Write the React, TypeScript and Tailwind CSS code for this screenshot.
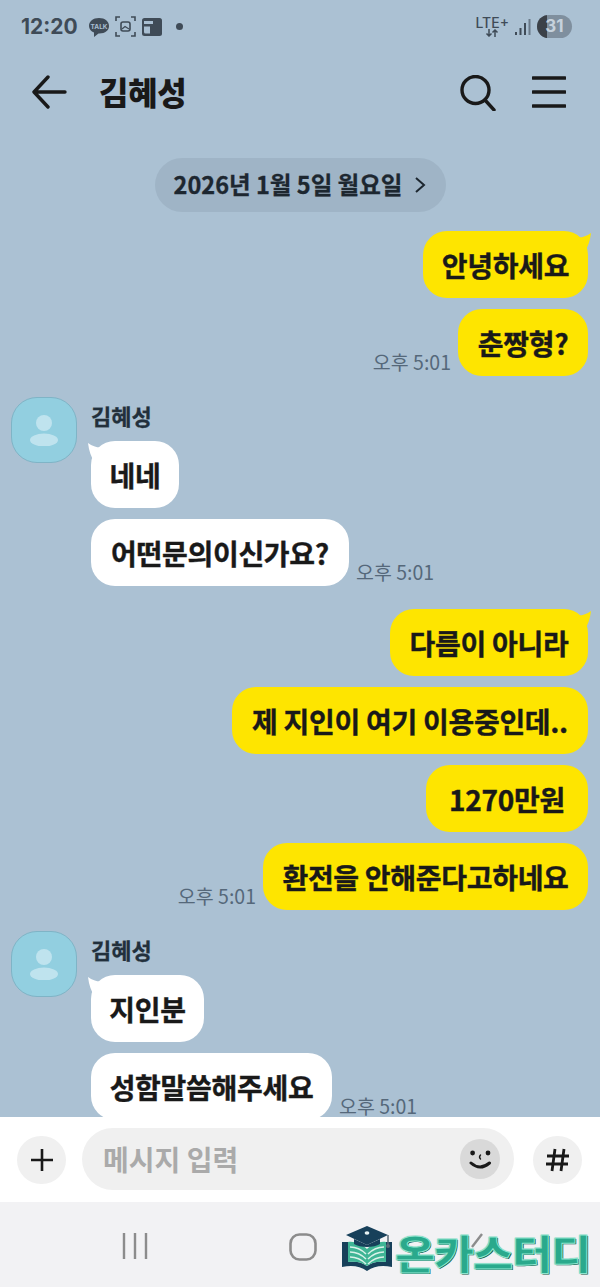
import React from 'react';

const font = "font-['Noto_Sans_CJK_KR','Noto_Sans',sans-serif]";

function Tail({ side, color }: { side: 'left' | 'right'; color: string }) {
  return (
    <svg
      className={side === 'right' ? 'absolute -right-[3px] top-[2px]' : 'absolute -left-[3px] top-[2px]'}
      width="24"
      height="24"
      viewBox="0 0 24 24"
    >
      {side === 'right' ? (
        <path d="M2 2 C10 6 17 5 24 0 C23 8 21 14 17 20 Z" fill={color} />
      ) : (
        <path d="M22 2 C14 6 7 5 0 0 C1 8 3 14 7 20 Z" fill={color} />
      )}
    </svg>
  );
}

function Bubble({
  text,
  mine,
  tail,
  width,
}: {
  text: string;
  mine?: boolean;
  tail?: boolean;
  width: number;
}) {
  return (
    <div
      className={`relative flex h-[67px] items-center justify-center rounded-[24px] text-[28px] font-bold tracking-[-0.3px] text-[#191919] [-webkit-text-stroke:0.4px_#191919] ${
        mine ? 'bg-[#fee500]' : 'bg-white'
      }`}
      style={{ width }}
    >
      {tail && <Tail side={mine ? 'right' : 'left'} color={mine ? '#fee500' : '#ffffff'} />}
      <span className="relative whitespace-nowrap">{text}</span>
    </div>
  );
}

function Time() {
  return <span className="mb-[4px] whitespace-nowrap text-[19.5px] leading-[20px] text-[#55687a]">오후 5:01</span>;
}

function Avatar() {
  return (
    <div className="flex h-[66px] w-[66px] shrink-0 items-center justify-center rounded-[26px] border border-[#7fb4c6] bg-[#92cfe0]">
      <svg width="30" height="32" viewBox="0 0 30 32">
        <circle cx="15" cy="9" r="8" fill="#bfe3ee" />
        <ellipse cx="15" cy="26" rx="14" ry="6.5" fill="#bfe3ee" />
      </svg>
    </div>
  );
}

function Incoming({ children }: { children: React.ReactNode }) {
  return (
    <div className="flex gap-[14px] pl-[11px]">
      <Avatar />
      <div className="flex flex-col">
        <div className="h-[44px] text-[22px] font-bold leading-[36px] text-[#22303c] [-webkit-text-stroke:0.3px_#22303c]">김혜성</div>
        <div className="flex flex-col gap-[11px]">{children}</div>
      </div>
    </div>
  );
}

function StatusBar() {
  return (
    <div className="flex h-[50px] shrink-0 items-center justify-between pl-[21px] pr-[28px] pt-[3px] text-[#3f4b57]">
      <div className="flex items-center">
        <span className="font-['Inter',sans-serif] text-[21px] font-bold">12:20</span>
        <svg className="ml-[10px]" width="22" height="22" viewBox="0 0 22 22">
          <path d="M11 2 C5 2 1 5.5 1 10 C1 13 3 15.3 6 16.6 L6 21 L10.5 17.5 C17 17.8 21 14.5 21 10 C21 5.5 17 2 11 2 Z" fill="#3f4b57" />
          <text x="11" y="12.5" textAnchor="middle" fontSize="6.5" fontWeight="700" fill="#a9bfd2" fontFamily="Inter">TALK</text>
        </svg>
        <svg className="ml-[5px]" width="21" height="21" viewBox="0 0 21 21" fill="none" stroke="#3f4b57" strokeWidth="1.6">
          <path d="M1 5 V1 H5 M16 1 H20 V5 M20 16 V20 H16 M5 20 H1 V16" />
          <rect x="6" y="6" width="9" height="9" rx="2" />
          <path d="M7 13 L10 10.5 L14 13" strokeWidth="1.2" />
        </svg>
        <svg className="ml-[6px]" width="20" height="18" viewBox="0 0 20 18">
          <rect x="0" y="0" width="20" height="18" rx="2.5" fill="#3f4b57" />
          <path d="M2 3 H11 V6 H2 Z M2 8.5 H8 V15.5 H3.5 Q2 15.5 2 14 Z" fill="#a9bfd2" />
        </svg>
        <span className="ml-[14px] h-[7px] w-[7px] rounded-full bg-[#3f4b57]" />
      </div>
      <div className="flex items-center">
        <div className="flex flex-col items-center">
          <span className="font-['Inter',sans-serif] text-[14px] font-medium leading-[13px]">LTE+</span>
          <svg width="14" height="8" viewBox="0 0 14 8" fill="none" stroke="#3f4b57" strokeWidth="1.5">
            <path d="M4 0 V7 M1.5 4.5 L4 7 L6.5 4.5 M10 8 V1 M7.5 3.5 L10 1 L12.5 3.5" />
          </svg>
        </div>
        <svg className="ml-[6px]" width="16" height="18" viewBox="0 0 16 18" fill="#3f4b57">
          <rect x="0" y="14" width="2" height="3" />
          <rect x="4.5" y="10" width="2" height="7" />
          <rect x="9" y="5" width="2" height="12" />
          <rect x="13.5" y="1" width="2" height="16" fill="#6a7a89" />
        </svg>
        <div className="relative ml-[6px] flex h-[23px] w-[35px] items-center justify-center overflow-hidden rounded-full bg-[#7f8f9e]">
          <span className="absolute inset-y-0 left-0 w-[10px] bg-[#3b4148]" />
          <span className="relative font-['Inter',sans-serif] text-[17px] font-bold text-[#c6d2dc]">31</span>
        </div>
      </div>
    </div>
  );
}

function Header() {
  return (
    <div className="flex h-[85px] shrink-0 items-start pl-[32px] pr-[34px] pt-[25px]">
      <svg width="36" height="34" viewBox="0 0 36 34" fill="none" stroke="#191919" strokeWidth="3.4" strokeLinecap="round" strokeLinejoin="round">
        <path d="M33 17 H3 M16 2 L2 17 L16 32" />
      </svg>
      <span className="ml-[31px] text-[32px] font-black leading-[32px] tracking-[-0.3px] text-[#191919]">김혜성</span>
      <svg className="ml-auto" width="36" height="36" viewBox="0 0 36 36" fill="none" stroke="#191919" strokeWidth="3.4" strokeLinecap="round">
        <circle cx="15.5" cy="15" r="13.5" />
        <path d="M25 25 L34 35" />
      </svg>
      <svg className="ml-[36px]" width="34" height="34" viewBox="0 0 34 34" fill="none" stroke="#191919" strokeWidth="3.4" strokeLinecap="round">
        <path d="M1 3 H33 M1 17 H33 M1 31 H33" />
      </svg>
    </div>
  );
}

function Logo() {
  return (
    <div className="absolute left-[340px] top-[1224px] flex items-start">
      <svg width="54" height="50" viewBox="0 0 54 50">
        <path d="M2 18 L2 43 C12 41 20 42 27 47 C34 42 42 41 52 43 L52 18 L46 18 L46 38 C38 37 32 38 27 42 C22 38 16 37 8 38 L8 18 Z" fill="#17405a" />
        <path d="M8 18 C15 17 22 20 27 25 C32 20 39 17 46 18 L46 38 C38 37 32 38 27 42 C22 38 16 37 8 38 Z" fill="#3fb595" />
        <path d="M10 23 C16 23 22 26 26 30 M10 28 C16 28 22 31 26 35 M10 33 C16 33 22 36 26 40 M44 23 C38 23 32 26 28 30 M44 28 C38 28 32 31 28 35 M44 33 C38 33 32 36 28 40" stroke="#d9f2e9" strokeWidth="1.6" fill="none" />
        <path d="M27 2 L48 11 L27 21 L6 11 Z" fill="#17405a" />
        <path d="M14 15 L14 20 C20 24 34 24 40 20 L40 15 L27 21 Z" fill="#17405a" />
        <ellipse cx="27" cy="9" rx="2.4" ry="1.8" fill="#e8f4f4" />
        <path d="M48 11 L48 21" stroke="#5a6a76" strokeWidth="1.5" />
        <circle cx="48" cy="22" r="2" fill="#5a6a76" />
      </svg>
      <span className="ml-[1px] mt-[4px] origin-left scale-x-[1.09] whitespace-nowrap text-[40px] font-black leading-[48px] tracking-[-1px] text-[#2aa98c] [-webkit-text-stroke:1px_#8fe6cf] [text-shadow:0_0_1px_#12604e,1px_1px_0_#12604e]">
        온카스터디
      </span>
    </div>
  );
}

export default function App() {
  return (
    <div className={`relative flex h-[1287px] w-[600px] flex-col overflow-hidden bg-[#abc1d3] ${font}`}>
      <StatusBar />
      <Header />

      <div className="flex h-[982px] flex-col overflow-hidden pt-[23px]">
        <button className="mx-auto flex h-[54px] w-[291px] shrink-0 items-center justify-center rounded-full bg-[#9fb4c6] text-[23.5px] font-bold text-[#1d2730] [-webkit-text-stroke:0.3px_#1d2730]">
          2026년 1월 5일 월요일
          <svg className="ml-[12px]" width="12" height="18" viewBox="0 0 12 18" fill="none" stroke="#1d2730" strokeWidth="2">
            <path d="M2 2 L10 9 L2 16" />
          </svg>
        </button>

        <div className="mt-[19px] flex shrink-0 flex-col items-end gap-[11px] pr-[12px]">
          <Bubble text="안녕하세요" mine tail width={165} />
          <div className="flex items-end gap-[7px]">
            <Time />
            <Bubble text="춘짱형?" mine width={130} />
          </div>
        </div>

        <div className="mt-[21px] shrink-0">
          <Incoming>
            <Bubble text="네네" tail width={88} />
            <div className="flex items-end gap-[7px]">
              <Bubble text="어떤문의이신가요?" width={258} />
              <Time />
            </div>
          </Incoming>
        </div>

        <div className="mt-[23px] flex shrink-0 flex-col items-end gap-[11px] pr-[12px]">
          <Bubble text="다름이 아니라" mine tail width={198} />
          <Bubble text="제 지인이 여기 이용중인데.." mine width={356} />
          <Bubble text="1270만원" mine width={162} />
          <div className="flex items-end gap-[7px]">
            <Time />
            <Bubble text="환전을 안해준다고하네요" mine width={325} />
          </div>
        </div>

        <div className="mt-[21px] shrink-0">
          <Incoming>
            <Bubble text="지인분" tail width={113} />
            <div className="flex items-end gap-[7px]">
              <Bubble text="성함말씀해주세요" width={241} />
              <Time />
            </div>
          </Incoming>
        </div>
      </div>

      <div className="z-10 flex h-[85px] shrink-0 items-start bg-white pl-[17px] pr-[18px] pt-[11px]">
        <div className="mt-[8px] flex h-[48px] w-[49px] items-center justify-center rounded-full bg-[#f0f0f0]">
          <svg width="24" height="24" viewBox="0 0 24 24" stroke="#191919" strokeWidth="2.6">
            <path d="M12 1 V23 M1 12 H23" />
          </svg>
        </div>
        <div className="ml-[16px] flex h-[62px] w-[432px] items-center rounded-full bg-[#f0f0f0] pl-[21px] pr-[14px]">
          <span className="text-[28px] font-bold text-[#aaaaaa]">메시지 입력</span>
          <div className="ml-auto flex h-[40px] w-[40px] items-center justify-center rounded-full bg-[#d9d9d9]">
            <svg width="26" height="26" viewBox="0 0 26 26" fill="none" stroke="#191919" strokeWidth="3" strokeLinecap="round">
              <circle cx="5.6" cy="7" r="2.4" fill="#191919" stroke="none" />
              <circle cx="21" cy="7" r="2.4" fill="#191919" stroke="none" />
              <path d="M13.5 9 Q11.5 11 13.5 13" strokeWidth="1.4" />
              <path d="M4 17 Q13 25 22.5 17" />
            </svg>
          </div>
        </div>
        <div className="ml-[19px] mt-[8px] flex h-[48px] w-[49px] items-center justify-center rounded-full bg-[#f0f0f0]">
          <svg width="26" height="26" viewBox="0 0 26 26" stroke="#191919" strokeWidth="2.8">
            <path d="M10 2 L7 24 M19 2 L16 24 M2 9 H24 M1 17 H23" />
          </svg>
        </div>
      </div>

      <div className="flex h-[85px] shrink-0 items-start bg-[#f2f2f4] pl-[122px] pt-[31px]">
        <svg width="26" height="26" viewBox="0 0 26 26" stroke="#8c8c8c" strokeWidth="2.4">
          <path d="M2 0 V26 M13 0 V26 M24 0 V26" />
        </svg>
        <svg className="ml-[141px]" width="28" height="28" viewBox="0 0 28 28" fill="none" stroke="#8c8c8c" strokeWidth="2.6">
          <rect x="1.5" y="1.5" width="25" height="25" rx="9" />
        </svg>
        <svg className="ml-[153px]" width="14" height="16" viewBox="0 0 14 16" stroke="#8c8c8c" strokeWidth="2.4">
          <path d="M12 1 L2 14" />
        </svg>
      </div>

      <Logo />
    </div>
  );
}
